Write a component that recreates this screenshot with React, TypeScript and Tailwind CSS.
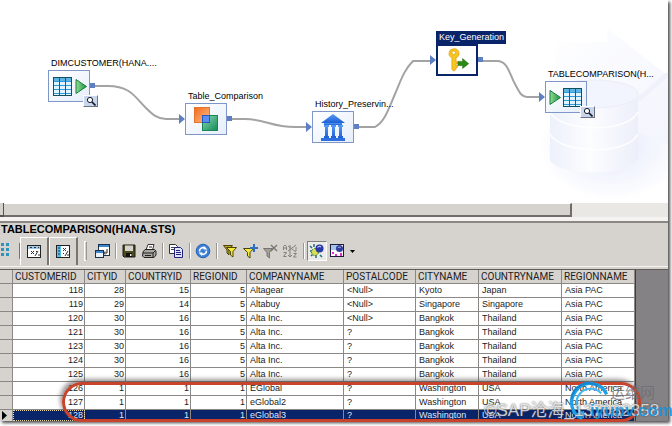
import type { ReactNode } from 'react'
import clsx from 'clsx'

interface FlowNode {
  id: string
  label: string
  x: number
  y: number
  icon: ReactNode
  input?: boolean
  output?: boolean
  preview?: boolean
  selected?: boolean
}

interface Column {
  name: string
  width: number
  numeric?: boolean
}

const COLUMNS: Column[] = [
  { name: 'CUSTOMERID', width: 72, numeric: true },
  { name: 'CITYID', width: 41, numeric: true },
  { name: 'COUNTRYID', width: 65, numeric: true },
  { name: 'REGIONID', width: 56, numeric: true },
  { name: 'COMPANYNAME', width: 97 },
  { name: 'POSTALCODE', width: 72 },
  { name: 'CITYNAME', width: 63 },
  { name: 'COUNTRYNAME', width: 83 },
  { name: 'REGIONNAME', width: 73 },
]

const ROWS = [
  ['118', '28', '15', '5', 'Altagear', '<Null>', 'Kyoto', 'Japan', 'Asia PAC'],
  ['119', '29', '14', '5', 'Altabuy', '<Null>', 'Singapore', 'Singapore', 'Asia PAC'],
  ['120', '30', '16', '5', 'Alta Inc.', '<Null>', 'Bangkok', 'Thailand', 'Asia PAC'],
  ['121', '30', '16', '5', 'Alta Inc.', '?', 'Bangkok', 'Thailand', 'Asia PAC'],
  ['123', '30', '16', '5', 'Alta Inc.', '?', 'Bangkok', 'Thailand', 'Asia PAC'],
  ['124', '30', '16', '5', 'Alta Inc.', '?', 'Bangkok', 'Thailand', 'Asia PAC'],
  ['125', '30', '16', '5', 'Alta Inc.', '?', 'Bangkok', 'Thailand', 'Asia PAC'],
  ['126', '1', '1', '1', 'EGlobal', '?', 'Washington', 'USA', 'North America'],
  ['127', '1', '1', '1', 'eGlobal2', '?', 'Washington', 'USA', 'North America'],
  ['128', '1', '1', '1', 'eGlobal3', '?', 'Washington', 'USA', 'North America'],
]

const SELECTED_ID = '128'

function TableGlyph({ x }: { x: number }) {
  return (
    <g>
      <rect x={x + 0.5} y="6.5" width="18" height="18" fill="#dff4ff" stroke="#12505f" />
      <rect x={x + 1} y="7" width="17" height="3" fill="#5cb4e4" />
      <path d={`M${x + 1} 10.5h17M${x + 1} 14.5h17M${x + 1} 18.5h17M${x + 1} 22.5h17`} stroke="#2f9bd8" />
      <path d={`M${x + 6.5} 7v17M${x + 12.5} 7v17`} stroke="#17606e" />
    </g>
  )
}

function PlayGlyph({ x }: { x: number }) {
  return <path d={`M${x} 8.5v14l10.5-7z`} fill="url(#play)" stroke="#16803c" />
}

const SourceIcon = (
  <svg viewBox="0 0 40 30" className="size-full">
    <TableGlyph x={4} />
    <PlayGlyph x={27} />
  </svg>
)

const CompareIcon = (
  <svg viewBox="0 0 40 30" className="size-full">
    <rect x="8.5" y="3.5" width="15" height="15" fill="url(#orange)" stroke="#e2742c" />
    <rect x="16.5" y="11.5" width="15" height="15" fill="url(#green)" stroke="#17875a" />
    <rect x="16.5" y="11.5" width="7" height="7" fill="#5c8df0" stroke="#2456c4" />
  </svg>
)

const HistoryIcon = (
  <svg viewBox="0 0 40 30" className="size-full" fill="url(#blue)">
    <path d="M20 2l12 9H8z" />
    <rect x="11" y="11" width="18" height="2" />
    <path d="M11 13h5v2h-1v9h1v2h-5v-2h1v-9h-1zM18 13h5v2h-1v9h1v2h-5v-2h1v-9h-1zM25 13h5v2h-1v9h1v2h-5v-2h1v-9h-1z" />
    <rect x="8" y="26" width="24" height="3" fill="#2d6fe0" />
  </svg>
)

const KeyIcon = (
  <svg viewBox="0 0 40 30" className="size-full">
    <path
      d="M16.500 3a5 5 0 0 0-2 9.600V25l2 2 2.500-2v-2h1.500v-2H19v-2h1.500v-2H19v-4.400A5 5 0 0 0 16.500 3zm0 2.300a1.900 1.900 0 1 1 0 3.800 1.900 1.900 0 0 1 0-3.800z"
      fill="#f8c51c"
      stroke="#d99a0b"
      strokeWidth=".7"
    />
    <path d="M21 16.500h5v-3l6.500 5.500-6.500 5v-3h-5z" fill="#2c8a14" stroke="#1d6a0d" strokeWidth=".6" />
  </svg>
)

const TargetIcon = (
  <svg viewBox="0 0 40 30" className="size-full">
    <PlayGlyph x={4} />
    <TableGlyph x={17} />
  </svg>
)

const NODES: FlowNode[] = [
  { id: 'source', label: 'DIMCUSTOMER(HANA....', x: 48, y: 57, icon: SourceIcon, output: true, preview: true },
  { id: 'compare', label: 'Table_Comparison', x: 185, y: 90, icon: CompareIcon, input: true, output: true },
  { id: 'history', label: 'History_Preservin...', x: 312, y: 98, icon: HistoryIcon, input: true, output: true },
  { id: 'key', label: 'Key_Generation', x: 436, y: 31, icon: KeyIcon, input: true, output: true, selected: true },
  { id: 'target', label: 'TABLECOMPARISON(H...', x: 545, y: 68, icon: TargetIcon, input: true, preview: true },
]

function NodeView({ node }: { node: FlowNode }) {
  return (
    <div className="absolute w-[42px]" style={{ left: node.x, top: node.y }}>
      <div
        className={clsx(
          'h-[13px] w-max pl-[3px] text-[9px] leading-[13px] whitespace-nowrap',
          node.selected ? 'bg-[#0a246a] pr-0.5 text-white' : 'text-black',
        )}
      >
        {node.label}
      </div>
      <button
        aria-label={node.label}
        className={clsx(
          'relative block h-8 w-full',
          node.selected
            ? 'border-2 border-[#0a246a] bg-white'
            : 'border border-[#7f97c8] bg-linear-to-br from-white to-[#e6eefb]',
        )}
      >
        {node.icon}
      </button>
      {node.input && (
        <svg viewBox="0 0 6 10" className="absolute top-6 -left-1.5 h-2.5 w-1.5">
          <path d="M0 0l6 5-6 5z" fill="#5f7fc4" />
        </svg>
      )}
      {node.output && <span className="absolute top-[26px] -right-[5px] size-[5px] bg-[#5f7fc4]" />}
      {node.preview && (
        <span className="absolute top-[38px] -right-2 flex h-3 w-[15px] items-center justify-center border border-white border-r-[#6c7484] border-b-[#6c7484] bg-[#c9d5ea]">
          <svg viewBox="0 0 10 10" className="size-2.5" fill="none" stroke="#111827">
            <circle cx="4" cy="4" r="2.600" fill="#fff" />
            <path d="M6 6l3.500 3.500" strokeWidth="1.600" />
          </svg>
        </span>
      )}
    </div>
  )
}

function FlowCanvas() {
  return (
    <section aria-label="Data flow" className="relative h-[203px] overflow-hidden bg-white">
      {/* faded database drum in the corner */}
      <svg viewBox="0 0 148 203" className="absolute top-0 right-0 h-full w-[148px] opacity-80">
        <defs>
          <linearGradient id="drum">
            <stop offset="0" stopColor="#e9eefb" />
            <stop offset=".45" stopColor="#fdfdff" />
            <stop offset="1" stopColor="#e8ecfa" />
          </linearGradient>
          <radialGradient id="halo">
            <stop offset="0" stopColor="#dfe5fb" />
            <stop offset="1" stopColor="#fff" />
          </radialGradient>
          <linearGradient id="beam" x2="1" y2="1">
            <stop offset="0" stopColor="#fff" />
            <stop offset="1" stopColor="#f1f3fd" />
          </linearGradient>
        </defs>
        <ellipse cx="92" cy="146" rx="72" ry="54" fill="url(#halo)" />
        <path d="M35 42h52V28l61 48v68L35 100z" fill="url(#beam)" />
        <path d="M30 94v66c8 16 80 18 88-2V92z" fill="url(#drum)" />
        <ellipse cx="74" cy="94" rx="44" ry="14" fill="#f0f3fd" stroke="#e6eaf8" />
        <path d="M30 112c10 20 78 22 88 0M30 134c10 20 78 22 88 0" fill="none" stroke="#fff" strokeWidth="1.500" />
        <path d="M118 100l30-26" stroke="#edf0fb" strokeWidth="5" />
      </svg>
      <svg viewBox="0 0 668 203" className="absolute top-0 left-0 h-[203px] w-[668px]" fill="none">
        <defs>
          <linearGradient id="play">
            <stop offset="0" stopColor="#8edb93" />
            <stop offset="1" stopColor="#1d9144" />
          </linearGradient>
          <linearGradient id="orange" x2="1" y2="1">
            <stop offset="0" stopColor="#f26a1b" />
            <stop offset="1" stopColor="#ffc08a" />
          </linearGradient>
          <linearGradient id="green" x2="1" y2="1">
            <stop offset="0" stopColor="#8ed9b8" />
            <stop offset="1" stopColor="#0f8a55" />
          </linearGradient>
          <linearGradient id="blue" x2="0" y2="1">
            <stop offset="0" stopColor="#5a9bf5" />
            <stop offset="1" stopColor="#1c5fd6" />
          </linearGradient>
        </defs>
        <g stroke="#a3a3a3" strokeWidth="2">
          <path d="M94 86h14c22 0 27 11 38 22 7 7 12 11 20 11h14" />
          <path d="M231 119l14 0c20 0 26 8 50 8h12" />
          <path d="M358 127h17c9-5 12-14 20-33 6-14 9-24 18-33h18" />
          <path d="M482 61h16c10 1 11 12 17 23 4 7 6 13 12 13h14" />
        </g>
      </svg>
      {NODES.map((node) => (
        <NodeView key={node.id} node={node} />
      ))}
    </section>
  )
}

function ToolButton({ label, pressed, children }: { label: string; pressed?: boolean; children: ReactNode }) {
  return (
    <button
      aria-label={label}
      className={clsx(
        'flex size-5 items-center justify-center',
        pressed && 'border border-[#808080] border-r-white border-b-white bg-[#ecebe8]',
      )}
    >
      <svg viewBox="0 0 16 16" className="size-4 shrink-0" fill="none">
        {children}
      </svg>
    </button>
  )
}

function Separator() {
  return (
    <div className="flex w-[7px] justify-center">
      <div className="h-4 w-0.5 border-l border-[#9b9893] bg-white" />
    </div>
  )
}

function TabButton({ label, children }: { label: string; children: ReactNode }) {
  return (
    <button
      aria-label={label}
      className="flex h-7 w-[29px] items-center justify-center border-t border-r-2 border-l border-t-white border-r-[#77746f] border-l-white"
    >
      <svg viewBox="0 0 16 16" className="size-4" fill="none">
        {children}
      </svg>
    </button>
  )
}

function Toolbar() {
  return (
    <div role="toolbar" className="flex h-[31px] items-center border-b border-[#f4f3f0] bg-[#d6d3ce]">
      <svg viewBox="0 0 20 16" className="h-4 w-5" fill="#2f93bd">
        <path d="M1 0h3v3H1zM6 0h3v3H6zM1 5h3v3H1zM6 5h3v3H6zM1 10h3v3H1zM6 10h3v3H6z" />
        <path d="M19 0h1v16h-1z" fill="#77746f" />
      </svg>
      <TabButton label="Row view">
        <rect x="1.500" y="1.500" width="13" height="12" fill="#fff" stroke="#222" />
        <path d="M2 2h12v3H2z" fill="#9fc7ee" />
        <path d="M4 3.500h2M8 3.500h2M12 3.500h1M5 7l3 3M8 7l-3 3M12 7l-3 5M10 7.500h1M12 11h2" stroke="#333" />
      </TabButton>
      <TabButton label="Column view">
        <rect x="1.500" y="1.500" width="13" height="12" fill="#fff" stroke="#222" />
        <path d="M2 2h4v11H2z" fill="#54c0ee" />
        <path d="M3 4h2M3 7h2M3 10h2M8 4l3 3M11 4L8 7M13 7l-3 5M8 9.500h1M12 11h2" stroke="#333" />
      </TabButton>
      <div className="flex w-[14px] justify-center">
        <div className="h-5 w-[3px] border border-white border-r-[#9b9893] bg-[#d6d3ce]" />
      </div>
      <ToolButton label="Properties">
        <rect x="4.500" y="1.500" width="11" height="11" fill="#fff" stroke="#18314f" />
        <path d="M5 2h10v2H5z" fill="#3f86cf" />
        <rect x="1.500" y="7.500" width="8" height="7" fill="#e9f2fb" stroke="#18314f" />
        <path d="M2 8h7v2H2z" fill="#3f86cf" />
        <path d="M13 6v4h-3M11 8.500L9.500 10l1.500 1.500" stroke="#222" />
      </ToolButton>
      <Separator />
      <ToolButton label="Save">
        <path d="M2 2h12v12H3l-1-1z" fill="#4d4a1e" stroke="#1c1c10" />
        <path d="M4 2.500h8V8H4z" fill="#d6d3ce" />
        <path d="M5 10h6v4H5z" fill="#111" />
        <path d="M9 11h1.500v2H9z" fill="#eee" />
      </ToolButton>
      <ToolButton label="Print">
        <path d="M5 7l2-5.500h6L11.500 7z" fill="#fff" stroke="#333" />
        <path d="M2 9l2-2.500h9.500L15 8v4l-2 2.500H3L1.500 13z" fill="#a9a7a2" stroke="#222" />
        <path d="M2 10h10l2.500-2.500M12 10v4M4 12.500h6M8 4h3" stroke="#222" />
      </ToolButton>
      <Separator />
      <ToolButton label="Copy">
        <path d="M1.500 1.500h6l2 2v7h-8z" fill="#fff" stroke="#333" />
        <path d="M3 4.500h4M3 6.500h4" stroke="#444" />
        <path d="M6.500 4.500h6l2 2v8h-8z" fill="#dfe5ff" stroke="#23237a" />
        <path d="M8 7.500h4M8 9.500h5M8 11.500h5" stroke="#23237a" />
      </ToolButton>
      <Separator />
      <ToolButton label="Refresh">
        <circle cx="8" cy="8" r="6.800" fill="#3c7fd6" stroke="#2463b4" />
        <path d="M4.500 8.500a3.500 3.500 0 0 1 5.500-3.200M11.500 7.500A3.500 3.500 0 0 1 6 10.700" stroke="#fff" strokeWidth="1.600" />
        <path d="M9 3l3.500 3.500H8.500zM7 13L3.500 9.500h4z" fill="#fff" />
      </ToolButton>
      <Separator />
      <ToolButton label="Filters">
        <path d="M1.500 2.500h9L7 7v5l-2-2V7z" fill="#b9a521" stroke="#4d440a" />
        <path d="M4.500 4.500h10L11 8.500V14l-2.500-2V8.500z" fill="#f4e838" stroke="#4d440a" />
      </ToolButton>
      <ToolButton label="Add filter">
        <path d="M1.500 5.500h10L8 9.500V15l-2.500-2V9.500z" fill="#f4e838" stroke="#4d440a" />
        <path d="M12 1v8M8 5h8" stroke="#2c6fc4" strokeWidth="2" />
      </ToolButton>
      <ToolButton label="Remove filter">
        <path d="M1.500 5.500h9L7.500 9.500V15l-2.500-2V9.500z" fill="#a3a09b" stroke="#77746f" />
        <path d="M9 2l6 6M15 2L9 8" stroke="#77746f" strokeWidth="1.300" />
      </ToolButton>
      <ToolButton label="Remove sort">
        <path
          d="M1.500 7V3.500L3 2l1.500 1.500V7M1.500 5h3M1.500 9.500h3l-3 4h3M8 2v12M6 12l2 2 2-2M6 3l8 6M14 2L6 8M11.500 10.500h3l-3 3.500h3M14 4v4"
          stroke="#84817c"
        />
      </ToolButton>
      <Separator />
      <ToolButton label="Show details" pressed>
        <path d="M1 3l2 2M1 8h2M2 13l2-2M7 12v3M11 12l2 2M5 1v3" stroke="#1c6f86" strokeWidth="1.500" />
        <circle cx="6" cy="9" r="3.500" fill="#d9df52" stroke="#3c7a38" strokeDasharray="2 1" />
        <circle cx="10.500" cy="5.500" r="4" fill="#2a37a6" />
        <path d="M8.500 4.500c1-1.500 2.500-1.500 3.500-.5" stroke="#b5c3f5" strokeWidth="1.300" />
      </ToolButton>
      <ToolButton label="Chart">
        <rect x="1.500" y="1.500" width="13" height="12" fill="#fff" stroke="#1c1c3c" />
        <path d="M2 2h6v5H2z" fill="#a7c5ec" />
        <path d="M3 9h2v2H3zM6 11h2v2H6zM11 10h2v3h-2z" fill="#e22ad0" />
        <circle cx="10.500" cy="5.500" r="3.500" fill="#2f3c9c" />
        <path d="M9 5c.8-1.200 2-1.200 2.800-.4" stroke="#b5c3f5" />
      </ToolButton>
      <button aria-label="More options" className="flex h-5 w-2.5 items-center justify-center">
        <svg viewBox="0 0 5 3" className="h-[3px] w-[5px]">
          <path d="M0 0h5L2.500 3z" />
        </svg>
      </button>
    </div>
  )
}

function ResultGrid() {
  return (
    <div className="relative border-t border-[#5f5d5a] bg-[#848284]">
      <table className="w-[636px] table-fixed border-separate border-spacing-0 border-r border-[#3f3d3b] bg-white text-[9px] leading-[13px] text-[#1c1c24]">
        <colgroup>
          <col style={{ width: 13 }} />
          {COLUMNS.map((column) => (
            <col key={column.name} style={{ width: column.width }} />
          ))}
        </colgroup>
        <thead>
          <tr className="bg-[#d6d3ce] font-['Roboto',sans-serif] text-[10px]">
            <th className="h-[14px] border-r border-b border-[#8a8785] p-0" aria-label="Row marker" />
            {COLUMNS.map((column) => (
              <th
                key={column.name}
                className="h-[14px] border-r border-b border-[#8a8785] p-0 pl-0.5 text-left font-normal whitespace-nowrap"
              >
                {column.name}
              </th>
            ))}
          </tr>
        </thead>
        <tbody>
          {ROWS.map((row) => {
            const selected = row[0] === SELECTED_ID
            return (
              <tr key={row[0]} className={clsx(selected && 'bg-[#0a246a] leading-[11px] text-[#dfe6f7]')}>
                <td className={clsx('border-r border-[#8a8785] bg-[#d6d3ce] p-0', !selected && 'border-b')}>
                  {selected && (
                    <svg viewBox="0 0 5 9" className="ml-0.5 h-[9px] w-[5px]">
                      <path d="M0 0l5 4.500L0 9z" />
                    </svg>
                  )}
                </td>
                {row.map((value, i) => (
                  <td
                    key={COLUMNS[i].name}
                    className={clsx(
                      'border-r border-[#8a8785] p-0 whitespace-nowrap',
                      COLUMNS[i].numeric ? 'pr-px text-right' : 'pl-[3px]',
                      !selected && 'border-b',
                      selected && i === 0 && 'outline-1 -outline-offset-1 outline-dotted outline-[#e8d9a0]',
                    )}
                  >
                    {value}
                  </td>
                ))}
              </tr>
            )
          })}
        </tbody>
      </table>

      {/* callout around the new rows */}
      <div className="absolute top-[112px] left-[62px] h-10 w-[579px] rounded-[20px] border-[3px] border-[#c8432b] shadow-[-2px_-3px_4px_rgba(70,70,70,0.55)]" />
      <Stamp />
    </div>
  )
}

function Stamp() {
  return (
    <>
      <svg viewBox="0 0 40 40" className="absolute top-[109px] left-[567px] size-11" fill="none" stroke="#1da0e6">
        <path d="M36 14A16 16 0 0 0 8 11C1 20 4 32 14 36" strokeWidth="3" />
        <path d="M31 13A13 13 0 0 0 12 13C6 20 9 29 16 33" stroke="#49b8f2" strokeWidth="2" />
        <path d="M28 6A16 16 0 0 0 4 18" stroke="#1487d0" strokeWidth="2" />
      </svg>
      <div className="absolute top-[113px] left-[610px] text-[15px] leading-5 text-[#6f6d74]/80">运维网</div>
      <div className="absolute top-[129px] left-[484px] text-[17px] leading-6 whitespace-nowrap text-white/75 [text-shadow:0_0_2px_#444]">
        ©SAP沧海_137082358
      </div>
      <div className="absolute top-[129px] left-[590px] text-[17px] leading-6 font-bold text-[#1593de]/85">iyunv.com</div>
    </>
  )
}

export default function App() {
  return (
    <div className="bg-white pr-1 pb-[5px] font-['Liberation_Sans','Noto_Sans_CJK_SC',sans-serif]">
      <main className="bg-[#d6d3ce] shadow-[2px_2px_3px_rgba(0,0,0,0.7)]">
        <FlowCanvas />
        <div className="flex h-[14px] bg-[#eae8e5]">
          <div className="w-1 border-r border-b-2 border-[#55524f] bg-[#d6d3ce]" />
          <div className="w-[85%] border-t border-r-2 border-b-2 border-[#6f6c69] border-t-white bg-[#d6d3ce]" />
        </div>
        <div className="h-1 bg-[#f4f3f1]" />
        <h1 className="border-t-2 border-[#8a8785] text-[11px] leading-[13px] font-bold text-black">
          <span className="pl-px">TABLECOMPARISON(HANA.STS)</span>
        </h1>
        <Toolbar />
        <div className="h-[2px]" />
        <ResultGrid />
      </main>
    </div>
  )
}
